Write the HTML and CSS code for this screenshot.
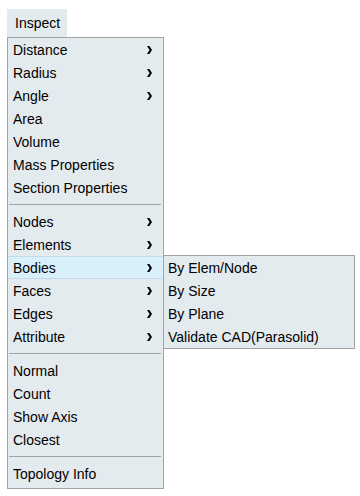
FILE: index.html
```html
<!DOCTYPE html>
<html lang="en">
<head>
    <meta charset="UTF-8">
    <meta name="viewport" content="width=device-width, initial-scale=1.0">
    <title>Inspect</title>
    <link rel="stylesheet" href="styles.css">
</head>
<body>
    <div class="menubar">
        <span class="tab">Inspect</span>
    </div>
    <div class="menu">
        <div class="item">Distance <svg class="arrow" width="5" height="8" viewBox="0 0 5 8"><path d="M0 0h2.4l2.6 4-2.6 4H0l2.6-4z"/></svg></div>
        <div class="item">Radius <svg class="arrow" width="5" height="8" viewBox="0 0 5 8"><path d="M0 0h2.4l2.6 4-2.6 4H0l2.6-4z"/></svg></div>
        <div class="item">Angle <svg class="arrow" width="5" height="8" viewBox="0 0 5 8"><path d="M0 0h2.4l2.6 4-2.6 4H0l2.6-4z"/></svg></div>
        <div class="item">Area</div>
        <div class="item">Volume</div>
        <div class="item">Mass Properties</div>
        <div class="item">Section Properties</div>
        <div class="sep"></div>
        <div class="item">Nodes <svg class="arrow" width="5" height="8" viewBox="0 0 5 8"><path d="M0 0h2.4l2.6 4-2.6 4H0l2.6-4z"/></svg></div>
        <div class="item">Elements <svg class="arrow" width="5" height="8" viewBox="0 0 5 8"><path d="M0 0h2.4l2.6 4-2.6 4H0l2.6-4z"/></svg></div>
        <div class="item active">Bodies <svg class="arrow" width="5" height="8" viewBox="0 0 5 8"><path d="M0 0h2.4l2.6 4-2.6 4H0l2.6-4z"/></svg>
            <div class="submenu">
                <div class="item">By Elem/Node</div>
                <div class="item">By Size</div>
                <div class="item">By Plane</div>
                <div class="item">Validate CAD(Parasolid)</div>
            </div>
        </div>
        <div class="item">Faces <svg class="arrow" width="5" height="8" viewBox="0 0 5 8"><path d="M0 0h2.4l2.6 4-2.6 4H0l2.6-4z"/></svg></div>
        <div class="item">Edges <svg class="arrow" width="5" height="8" viewBox="0 0 5 8"><path d="M0 0h2.4l2.6 4-2.6 4H0l2.6-4z"/></svg></div>
        <div class="item">Attribute <svg class="arrow" width="5" height="8" viewBox="0 0 5 8"><path d="M0 0h2.4l2.6 4-2.6 4H0l2.6-4z"/></svg></div>
        <div class="sep"></div>
        <div class="item">Normal</div>
        <div class="item">Count</div>
        <div class="item">Show Axis</div>
        <div class="item">Closest</div>
        <div class="sep"></div>
        <div class="item">Topology Info</div>
    </div>
</body>
</html>
```

FILE: styles.css
```css
body {
    font-family: "Liberation Sans", Arial, sans-serif;
    font-size: 14px;
    color: #000;
    background-color: #fff;
    margin: 0;
    padding: 9px 0 0 7px;
}

.menubar {
    display: flex;
}

.tab {
    background-color: #e4ebef;
    height: 28px;
    line-height: 29px;
    padding: 0 7px 0 8px;
}

.menu {
    width: 155px;
    background-color: #e4ebef;
    border: 1px solid #a3a3a3;
    padding-bottom: 3px;
}

.item {
    position: relative;
    box-sizing: border-box;
    height: 23px;
    padding: 1px 11px 0 5px;
    display: flex;
    justify-content: space-between;
    align-items: center;
    white-space: nowrap;
}

.item .arrow {
    fill: #000;
}

.active {
    background-color: #d9f0fb;
    box-shadow: inset 0 1px 0 #c3dbe8, inset 0 -1px 0 #c3dbe8;
}

.sep {
    height: 11px;
    display: flex;
    align-items: center;
    padding: 0 2px 0 1px;
}

.sep::after {
    content: "";
    flex-grow: 1;
    height: 1px;
    background-color: #a3a3a3;
}

.submenu {
    position: absolute;
    left: 100%;
    top: -1px;
    width: 190px;
    background-color: #e4ebef;
    border: 1px solid #a3a3a3;
}

.submenu .item {
    padding-left: 4px;
}
```
